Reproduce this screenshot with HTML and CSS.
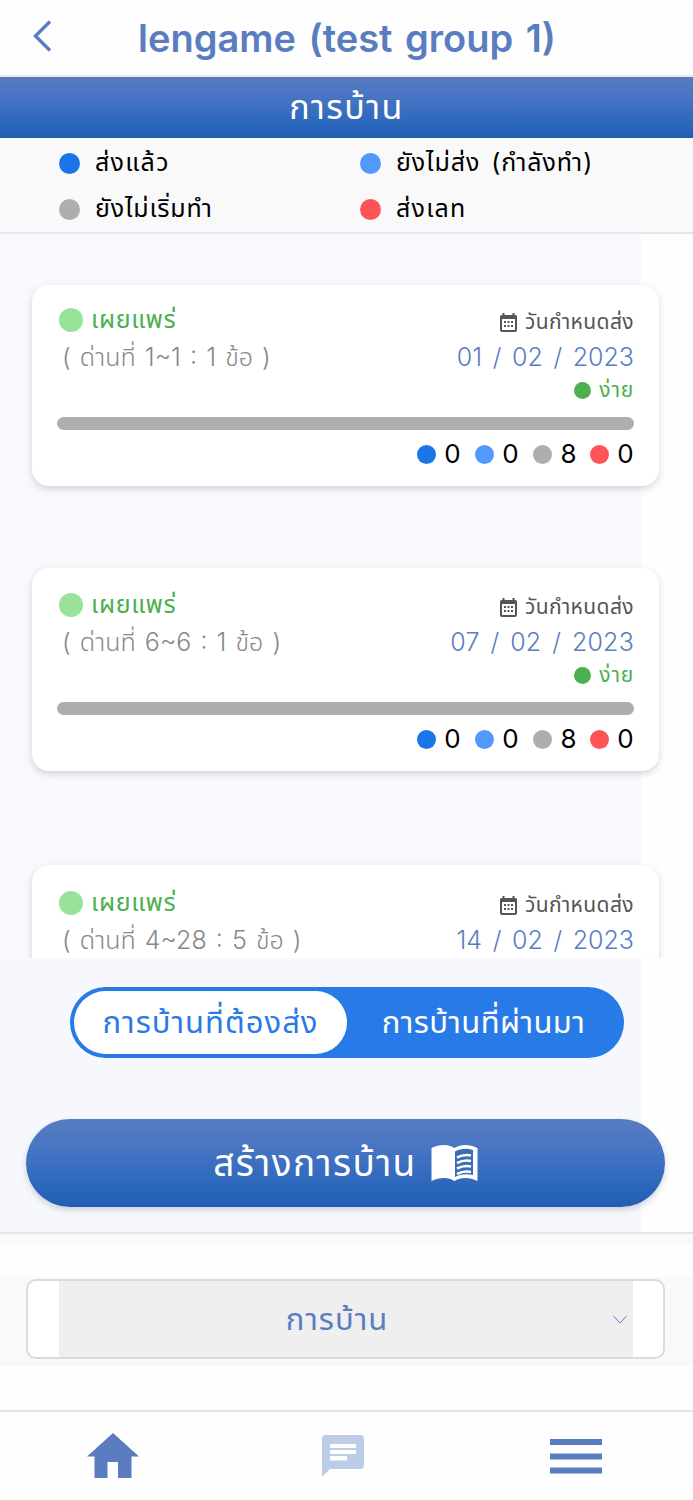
FILE: index.html
```
<!DOCTYPE html>
<html lang="th">
<head>
<meta charset="utf-8">
<title>lengame</title>
<link rel="stylesheet" href="styles.css">
</head>
<body>
<header class="top">
  <svg class="back" viewBox="0 0 20 32"><path d="M18 1.500 3.500 16 18 30.500" fill="none" stroke="#5a7dbf" stroke-width="3.400"/></svg>
  <h1><span class="t-title">lengame (test group 1)</span></h1>
</header>
<div class="banner"><span class="t-banner">การบ้าน</span></div>
<section class="legend">
  <div class="key"><i class="dot sent"></i><span class="k1">ส่งแล้ว</span></div>
  <div class="key"><i class="dot doing"></i><span class="k2">ยังไม่ส่ง (กำลังทำ)</span></div>
  <div class="key"><i class="dot idle"></i><span class="k3">ยังไม่เริ่มทำ</span></div>
  <div class="key"><i class="dot late"></i><span class="k4">ส่งเลท</span></div>
</section>
<main class="list">
  <article class="card">
    <div class="info">
      <div class="left">
        <div class="status"><i class="dot pub"></i><span class="t-pub">เผยแพร่</span></div>
        <div class="stage"><span class="s1">( ด่านที่ 1~1 : 1 ข้อ )</span></div>
      </div>
      <div class="right">
        <div class="due"><svg class="cal" viewBox="0 0 17 19"><path fill="#555" fill-rule="evenodd" d="M2.500 0h2v2h8V0h2v2A2 2 0 0 1 17 4v13a2 2 0 0 1-2 2H2a2 2 0 0 1-2-2V4a2 2 0 0 1 2.500-2zM2 6v11h13V6zM4 8h2v2H4zm3.500 0h2v2h-2zM11 8h2v2h-2zM4 12h2v2H4zm3.500 0h2v2h-2zm3.500 0h2v2h-2z"/></svg><span class="t-due">วันกำหนดส่ง</span></div>
        <div class="date"><span class="d1">01 / 02 / 2023</span></div>
        <div class="level"><i class="dot easy"></i><span class="t-easy">ง่าย</span></div>
      </div>
    </div>
    <div class="bar"></div>
    <div class="counts"><i class="dot sent"></i><b>0</b><i class="dot doing"></i><b>0</b><i class="dot idle"></i><b>8</b><i class="dot late"></i><b>0</b></div>
  </article>
  <article class="card second">
    <div class="info">
      <div class="left">
        <div class="status"><i class="dot pub"></i><span class="t-pub">เผยแพร่</span></div>
        <div class="stage"><span class="s2">( ด่านที่ 6~6 : 1 ข้อ )</span></div>
      </div>
      <div class="right">
        <div class="due"><svg class="cal" viewBox="0 0 17 19"><path fill="#555" fill-rule="evenodd" d="M2.500 0h2v2h8V0h2v2A2 2 0 0 1 17 4v13a2 2 0 0 1-2 2H2a2 2 0 0 1-2-2V4a2 2 0 0 1 2.500-2zM2 6v11h13V6zM4 8h2v2H4zm3.500 0h2v2h-2zM11 8h2v2h-2zM4 12h2v2H4zm3.500 0h2v2h-2zm3.500 0h2v2h-2z"/></svg><span class="t-due">วันกำหนดส่ง</span></div>
        <div class="date"><span class="d2">07 / 02 / 2023</span></div>
        <div class="level"><i class="dot easy"></i><span class="t-easy">ง่าย</span></div>
      </div>
    </div>
    <div class="bar"></div>
    <div class="counts"><i class="dot sent"></i><b>0</b><i class="dot doing"></i><b>0</b><i class="dot idle"></i><b>8</b><i class="dot late"></i><b>0</b></div>
  </article>
  <article class="card third">
    <div class="info">
      <div class="left">
        <div class="status"><i class="dot pub"></i><span class="t-pub">เผยแพร่</span></div>
        <div class="stage"><span class="s3">( ด่านที่ 4~28 : 5 ข้อ )</span></div>
      </div>
      <div class="right">
        <div class="due"><svg class="cal" viewBox="0 0 17 19"><path fill="#555" fill-rule="evenodd" d="M2.500 0h2v2h8V0h2v2A2 2 0 0 1 17 4v13a2 2 0 0 1-2 2H2a2 2 0 0 1-2-2V4a2 2 0 0 1 2.500-2zM2 6v11h13V6zM4 8h2v2H4zm3.500 0h2v2h-2zM11 8h2v2h-2zM4 12h2v2H4zm3.500 0h2v2h-2zm3.500 0h2v2h-2z"/></svg><span class="t-due">วันกำหนดส่ง</span></div>
        <div class="date"><span class="d3">14 / 02 / 2023</span></div>
      </div>
    </div>
  </article>
</main>
<section class="actions">
  <div class="toggle">
    <div class="opt on"><span class="t-on">การบ้านที่ต้องส่ง</span></div>
    <div class="opt"><span class="t-off">การบ้านที่ผ่านมา</span></div>
  </div>
  <div class="create"><span class="t-create">สร้างการบ้าน</span>
    <svg class="book" viewBox="0 0 46 36"><path fill="#fff" d="M0 3C8-1 17-1 23 3c6-4 15-4 23 0v33c-8-4-17-4-23 0-6-4-15-4-23 0z"/><path d="M23.500 6.500c5-3 12-3.500 18-1.500v25c-6-1.500-13-1-18 2z" fill="#3b6cb9"/><g fill="none" stroke="#fff" stroke-width="2.600"><path d="M25.500 12.500q7-3.500 14-2M25.500 18q7-3.500 14-2M25.500 23.500q7-3.500 14-2M25.500 29q7-3.500 14-2"/></g></svg>
  </div>
</section>
<section class="pick">
  <div class="select"><div class="field"><span class="t-select">การบ้าน</span><svg class="chev" viewBox="0 0 14 9"><path d="m.5 1 6.500 7 6.500-7" fill="none" stroke="#5a7dbf"/></svg></div></div>
</section>
<nav class="tabs">
  <svg class="home" viewBox="0 0 52 46"><path fill="#5a7dbf" d="M26 0 52 23.500h-7.500V45H31V29H20.500v16H7.500V23.500H0z"/></svg>
  <svg class="chat" viewBox="0 0 42 42"><path fill="#bdcce6" fill-rule="evenodd" d="M4 0h34a4 4 0 0 1 4 4v26a4 4 0 0 1-4 4H8l-8 8V4a4 4 0 0 1 4-4zM8 9v4h26V9zm0 6v4h26v-4zm0 6v4.500h17V21z"/></svg>
  <svg class="menu" viewBox="0 0 52 35"><path fill="#5a7dbf" d="M0 0h52v6H0zM0 14.500h52v6H0zM0 28.500h52v6H0z"/></svg>
</nav>
</body>
</html>
```
FILE: styles.css
```
* { box-sizing: border-box; }
body { margin: 0; width: 693px; height: 1500px; overflow: hidden; background: #fefefe; font-family: Inter, "Noto Sans Thai", sans-serif; font-size: 25px; line-height: 1; }
span { display: inline-block; white-space: nowrap; padding-bottom: 2px; }
svg { display: block; flex: none; }
.dot { display: block; flex: none; width: 21px; height: 21px; border-radius: 50%; }
.sent { background: #1c74e9; }
.doing { background: #5199fb; }
.idle { background: #aeaeae; }
.late { background: #fc5457; }
.pub { width: 24px; height: 24px; background: #98e299; }
.easy { width: 17px; height: 17px; background: #4caf50; }
.top { height: 77px; display: flex; align-items: center; padding-left: 32px; border-bottom: 2px solid #e8e8ee; }
.back { width: 20px; height: 32px; margin-top: -4px; }
h1 { margin: 2px 0 0 86px; font-size: 38px; font-weight: 600; color: #5a7dbf; word-spacing: 3px; }
.banner { height: 61px; display: flex; align-items: center; justify-content: center; background: linear-gradient(#587cc1, #4674c3 35%, #2664bb 85%, #235db1); color: #fff; font-size: 34px; }
.t-banner { letter-spacing: 1.4px; }
.legend { height: 96px; display: grid; grid-template-columns: 301px 1fr; grid-template-rows: 46px 46px; padding: 2px 0 0 59px; background: #f9f9f9; border-bottom: 2px solid #e4e5ee; color: #000; }
.key { display: flex; align-items: center; gap: 15px; }
.k1 { letter-spacing: 1.3px; }
.k2 { letter-spacing: .9px; word-spacing: 3px; }
.k3 { letter-spacing: .8px; }
.k4 { letter-spacing: 1.2px; }
.list { height: 724px; overflow: hidden; padding: 51px 34px 0 32px; background: linear-gradient(#f8f9fd, #f8f9fd) left / 641px 100% no-repeat; }
.card { height: 201px; padding: 20px 25px 0; border-radius: 17px; background: #fff; box-shadow: 0 3px 7px rgba(60, 65, 85, .2); }
.second { margin-top: 82px; height: 203px; padding-top: 22px; }
.third { margin-top: 94px; padding-top: 23px; }
.info { display: flex; justify-content: space-between; height: 112px; }
.left { padding: 3px 0 0 2px; }
.status { display: flex; align-items: center; height: 24px; gap: 8px; color: #4caf50; }
.t-pub { letter-spacing: .6px; }
.stage { height: 44px; padding: 13px 0 0 3px; color: #888; font-weight: 300; word-spacing: 2.1px; }
.right { display: flex; flex-direction: column; align-items: flex-end; }
.due { display: flex; align-items: center; height: 34px; gap: 8px; color: #555; font-size: 21px; }
.t-due { letter-spacing: .4px; }
.cal { width: 17px; height: 19px; }
.date { display: flex; align-items: center; height: 38px; color: #5a7dbf; font-weight: 300; font-size: 25px; word-spacing: 3.6px; }
.d2 { letter-spacing: .2px; }
.level { display: flex; align-items: center; height: 26px; gap: 8px; color: #4caf50; font-size: 21px; }
.t-easy { letter-spacing: .8px; }
.bar { height: 13px; border-radius: 7px; background: #aeaeae; }
.counts { display: flex; justify-content: flex-end; align-items: center; height: 48px; color: #000; }
.counts .dot { width: 19px; height: 19px; }
.counts b { width: 17px; margin: 0 14px 0 8px; font-weight: 400; font-size: 26px; text-align: center; }
.counts b:nth-of-type(3) { margin-right: 13px; }
.counts b:last-child { margin-right: 0; }
.actions { height: 276px; padding: 29px 28px 0 26px; background: linear-gradient(#f6f8fd, #f6f8fd) left / 641px 100% no-repeat; border-bottom: 2px solid #e1e4ed; }
.toggle { width: 554px; height: 71px; margin-left: 44px; padding: 4px; display: flex; border-radius: 36px; background: #287ae7; color: #fff; font-size: 31px; }
.opt { flex: 1; display: flex; align-items: center; justify-content: center; border-radius: 32px; }
.on { background: #fff; color: #287ae7; }
.t-on { letter-spacing: 1px; }
.t-off { letter-spacing: .4px; }
.create { height: 88px; margin-top: 61px; display: flex; align-items: center; justify-content: center; gap: 14px; border-radius: 44px; background: linear-gradient(#587cc1, #4674c3 35%, #2664bb 85%, #235db1); box-shadow: 0 3px 6px rgba(60, 65, 85, .22); color: #fff; font-size: 37px; }
.t-create { letter-spacing: 1.4px; }
.book { width: 47px; height: 36px; }
.pick { height: 176px; padding: 45px 28px 0 26px; background: linear-gradient(#f9f9f9, #f9f9f9) 0 0 / 100% 11px no-repeat, linear-gradient(#f9f9f9, #f9f9f9) 0 43px / 100% 89px no-repeat; }
.select { height: 80px; padding: 0 30px 0 31px; border: 2px solid #d9dbe1; border-radius: 10px; background: #fff; }
.field { height: 100%; display: grid; grid-template-columns: 8px 1fr 26px; align-items: center; justify-items: center; background: #efefef; color: #5a7dbf; font-size: 31px; }
.t-select { grid-column: 2; letter-spacing: 1px; }
.chev { width: 14px; height: 9px; }
.tabs { height: 90px; display: flex; align-items: flex-start; border-top: 2px solid #e1e3ea; padding: 21px 0 0 87px; }
.home { width: 52px; height: 46px; }
.chat { width: 42px; height: 42px; margin: 2px 0 0 183px; }
.menu { width: 52px; height: 35px; margin: 6px 0 0 186px; }
```
